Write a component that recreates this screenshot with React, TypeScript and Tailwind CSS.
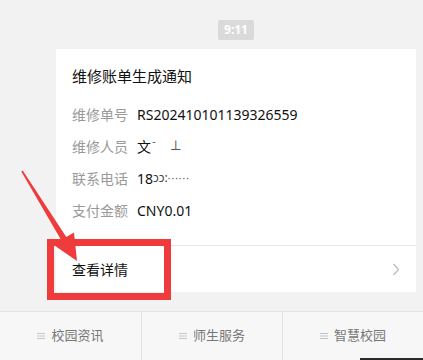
import React from "react";

const Menu = () => (
  <svg width="8" height="8" viewBox="0 0 8 8" className="shrink-0">
    <path d="M0 1.5h8M0 4h8M0 6.5h8" stroke="#c4c4c4" strokeWidth="1" />
  </svg>
);

export default function App() {
  const font = { fontFamily: '"Noto Sans", "Noto Sans CJK SC", sans-serif' };
  const rows: [string, React.ReactNode][] = [
    ["维修单号", "RS202410101139326559"],
    [
      "维修人员",
      <span className="flex items-center">
        <span>文</span>
        <span className="text-[#555] text-[10px] ml-[1px]">ˉ</span>
        <span className="ml-[14px] text-[#333] text-[12px]">⊥</span>
      </span>,
    ],
    [
      "联系电话",
      <span className="flex items-center">
        <span>18</span>
        <span className="text-[#444] text-[12px]">ɔɔ:</span>
        <span className="text-[#555] text-[10px] tracking-[1px]">······</span>
      </span>,
    ],
    ["支付金额", "CNY0.01"],
  ];
  const tabs = ["校园资讯", "师生服务", "智慧校园"];
  return (
    <div className="relative w-[423px] h-[360px] bg-[#f2f2f2] flex flex-col overflow-hidden" style={font}>
      <div className="pl-[56px] pr-[7px] flex flex-col">
        <div className="flex justify-center pt-[20px]">
          <div className="h-[20px] px-[6px] bg-[#dadada] rounded-[2px] text-white text-[12px] font-bold leading-[20px]">
            9:11
          </div>
        </div>
        <div className="mt-[9px] bg-white h-[243px] flex flex-col">
          <div className="px-[16px] pt-[17px]">
            <div className="text-[15px] leading-[20px] text-[#111]">维修账单生成通知</div>
            <div className="mt-[12px] flex flex-col">
              {rows.map(([k, v]) => (
                <div key={k} className="h-[32px] flex items-center text-[14px]">
                  <span className="text-[#9a9a9a] w-[65px] shrink-0">{k}</span>
                  <span className="text-[#111]">{v}</span>
                </div>
              ))}
            </div>
          </div>
          <div className="mt-[19px] h-px bg-[#e6e6e6]" />
          <div className="flex-1 px-[16px] flex items-center justify-between">
            <span className="text-[14px] text-[#111]">查看详情</span>
            <svg width="8" height="13" viewBox="0 0 8 13">
              <path d="M1.5 1l5 5.5-5 5.5" fill="none" stroke="#b8b8b8" strokeWidth="1.2" />
            </svg>
          </div>
        </div>
      </div>
      <div className="mt-[19px] h-[49px] bg-[#f7f7f7] border-t border-[#e2e2e2] grid grid-cols-3">
        {tabs.map((t, i) => (
          <div
            key={t}
            className={`flex items-center justify-center gap-[6px] text-[13px] text-[#777] ${i > 0 ? "border-l border-[#e3e3e3]" : ""}`}
          >
            <Menu />
            <span>{t}</span>
          </div>
        ))}
      </div>
      <div className="absolute right-0 bottom-0 w-[63px] h-[2px] bg-[#2a2a2a]" />
      <svg className="absolute left-0 top-0 pointer-events-none" width="423" height="360">
        <rect x="50.5" y="242.5" width="117" height="54" fill="none" stroke="#ef3b3b" strokeWidth="7" />
        <polygon
          points="22.7,170.6 66.3,237.1 74,232.5 77,261 53.4,244.7 61.1,240.1 21.3,171.4"
          fill="#ef3b3b"
        />
      </svg>
    </div>
  );
}
